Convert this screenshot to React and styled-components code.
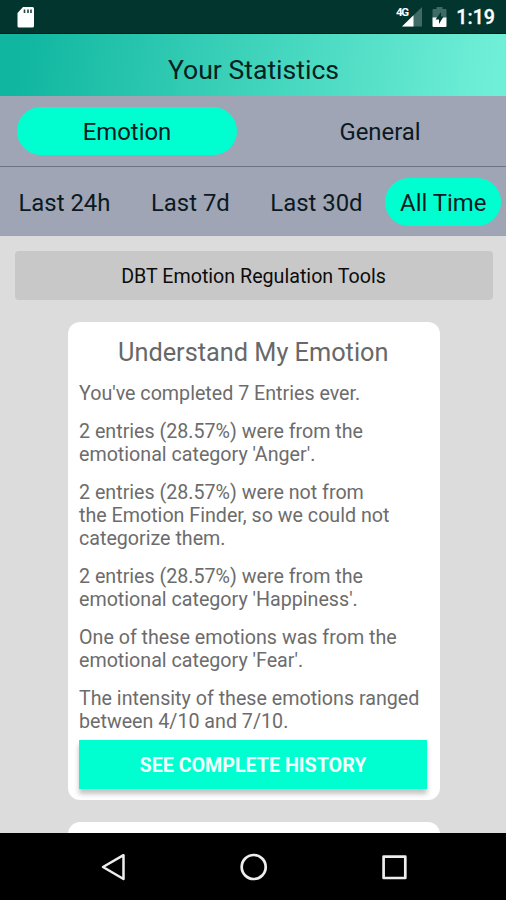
import React from 'react'
import styled, { createGlobalStyle } from 'styled-components'

const GlobalStyle = createGlobalStyle`
  * {
    box-sizing: border-box;
  }
  body {
    margin: 0;
    font-family: Roboto, sans-serif;
    background: #dcdcdc;
  }
`

const Screen = styled.div`
  display: flex;
  flex-direction: column;
  width: 506px;
  height: 900px;
  overflow: hidden;
`

const StatusBar = styled.div`
  display: flex;
  flex: none;
  align-items: center;
  justify-content: space-between;
  height: 34px;
  padding: 1px 11px 0 16px;
  background: #03352f;
  border-bottom: 1px solid #001a17;
`

const StatusIcons = styled.div`
  display: flex;
  align-items: center;
`

const SignalIcon = styled.svg`
  margin-right: 10px;
`

const BatteryIcon = styled.svg`
  margin-right: 9px;
`

const Clock = styled.span`
  font-size: 19.67px;
  font-weight: 500;
  line-height: 32px;
  padding-top: 2px;
  color: #fff;
  -webkit-text-stroke: 0.3px #fff;
`

const Header = styled.header`
  display: flex;
  flex: none;
  align-items: center;
  justify-content: center;
  height: 62px;
  padding: 8px 0 0 1px;
  background: linear-gradient(97deg, #10b6a0 4%, #3fd3bb 50%, #70efd8 98%);
`

const HeaderTitle = styled.h1`
  margin: 0;
  font-size: 26.6px;
  font-weight: 400;
  color: #06211f;
`

const TabBar = styled.nav`
  display: flex;
  flex: none;
  align-items: center;
  gap: 33px;
  height: 71px;
  padding: 0 17px;
  background: #9fa5b5;
  border-bottom: 1px solid #6c7384;
`

const RangeBar = styled(TabBar)`
  justify-content: space-between;
  gap: 0;
  height: 69px;
  padding: 2px 4.5px 0 3.5px;
  border-bottom: 1px solid #98a2b0;

  button:last-child {
    margin-left: -3px;
  }
`

const Tab = styled.button`
  flex: ${props => (props.$wide ? '0 0 220px' : 'none')};
  height: 48px;
  padding: 2px ${props => (props.$wide ? '0' : '15px')} 0;
  border: none;
  border-radius: 24px;
  background: ${props => (props.$active ? '#00ffd0' : 'transparent')};
  font-family: inherit;
  font-size: 23.9px;
  white-space: nowrap;
  color: #0b1a22;
`

const Content = styled.main`
  display: flex;
  flex: 1;
  flex-direction: column;
  align-items: center;
  min-height: 0;
  padding-top: 15px;
  overflow: hidden;
  background: #dcdcdc;
`

const ToolsButton = styled.button`
  flex: none;
  width: 478px;
  height: 49px;
  margin: 0 0 22px 1px;
  padding: 2px 0 0;
  border: none;
  border-radius: 4px;
  background: #c8c8c8;
  font-family: inherit;
  font-size: 19.67px;
  color: #0c0c0c;
`

const Card = styled.section`
  flex: none;
  width: 372px;
  height: 478px;
  margin: 0 0 22px 1px;
  padding: 15px 12px 0 11.5px;
  border-radius: 12px;
  background: #fff;
`

const CardTitle = styled.h2`
  margin: 0 0 13px;
  font-size: 25.3px;
  font-weight: 400;
  line-height: 32px;
  text-align: center;
  color: #686868;
`

const Paragraph = styled.p`
  margin: 0 0 15px;
  font-size: 19.67px;
  line-height: 23px;
  white-space: pre;
  color: #6c6c6c;
`

const HistoryButton = styled.button`
  display: block;
  width: 348px;
  height: 49px;
  margin-top: -8px;
  padding: 2px 0 0;
  border: none;
  background: #00ffd0;
  box-shadow: 0 5px 5px rgba(0, 0, 0, 0.24);
  font-family: inherit;
  font-size: 19.67px;
  font-weight: 700;
  color: #f2fffc;
`

const NavBar = styled.footer`
  display: flex;
  flex: none;
  align-items: center;
  justify-content: space-between;
  height: 67px;
  padding: 0 98px;
  background: #000;
`

const ranges = ['Last 24h', 'Last 7d', 'Last 30d', 'All Time']

const summary = [
  "You've completed 7 Entries ever.",
  "2 entries (28.57%) were from the\nemotional category 'Anger'.",
  '2 entries (28.57%) were not from\nthe Emotion Finder, so we could not\ncategorize them.',
  "2 entries (28.57%) were from the\nemotional category 'Happiness'.",
  "One of these emotions was from the\nemotional category 'Fear'.",
  'The intensity of these emotions ranged\nbetween 4/10 and 7/10.',
]

export default function App() {
  return (
    <Screen>
      <GlobalStyle />
      <StatusBar>
        <svg width="20" height="24" viewBox="0 0 20 24">
          <path d="M7 2H16.500Q18 2 18 3.500V21Q18 22.500 16.500 22.500H3Q1.500 22.500 1.500 21V8Z" fill="#fff" />
          <path d="M8.500 4.500V8M12 4.500V8M15 4.500V8" stroke="#24443f" strokeWidth="1.600" />
        </svg>
        <StatusIcons>
          <SignalIcon width="26" height="22" viewBox="0 0 26 22">
            <path d="M6 20.500L26 1V20.500Z" fill="#3f6a65" />
            <path d="M6 20.500L17.500 9.300V20.500Z" fill="#fff" />
            <text x="0" y="9.500" fontSize="11.500" fontWeight="700" fill="#fff" textLength="13">4G</text>
          </SignalIcon>
          <BatteryIcon width="15" height="22" viewBox="0 0 14 22">
            <path d="M0 4Q0 3 1 3H4V1H10V3H13Q14 3 14 4V12H0Z" fill="#3f6a65" />
            <path d="M0 11.500H14V20Q14 21 13 21H1Q0 21 0 20Z" fill="#fff" />
            <path d="M8.500 6L3 13.500H6.500V18L11 10.500H8.500Z" fill="#03352f" />
          </BatteryIcon>
          <Clock>1:19</Clock>
        </StatusIcons>
      </StatusBar>

      <Header>
        <HeaderTitle>Your Statistics</HeaderTitle>
      </Header>

      <TabBar>
        <Tab $wide $active>Emotion</Tab>
        <Tab $wide>General</Tab>
      </TabBar>
      <RangeBar>
        {ranges.map(range => (
          <Tab key={range} $active={range === 'All Time'}>{range}</Tab>
        ))}
      </RangeBar>

      <Content>
        <ToolsButton>DBT Emotion Regulation Tools</ToolsButton>
        <Card>
          <CardTitle>Understand My Emotion</CardTitle>
          {summary.map(text => (
            <Paragraph key={text}>{text}</Paragraph>
          ))}
          <HistoryButton>SEE COMPLETE HISTORY</HistoryButton>
        </Card>
        <Card />
      </Content>

      <NavBar>
        <svg width="30" height="30" viewBox="0 0 30 30" fill="none" stroke="#eee" strokeWidth="2.500" strokeLinejoin="round">
          <path d="M5 15L25.500 3.200V27Z" />
        </svg>
        <svg width="30" height="30" viewBox="0 0 30 30" fill="none" stroke="#eee" strokeWidth="2.700">
          <circle cx="15.700" cy="15" r="12" />
        </svg>
        <svg width="30" height="30" viewBox="0 0 30 30" fill="none" stroke="#eee" strokeWidth="2.700" strokeLinejoin="round">
          <rect x="5.600" y="4.700" width="21.700" height="21.300" />
        </svg>
      </NavBar>
    </Screen>
  )
}
